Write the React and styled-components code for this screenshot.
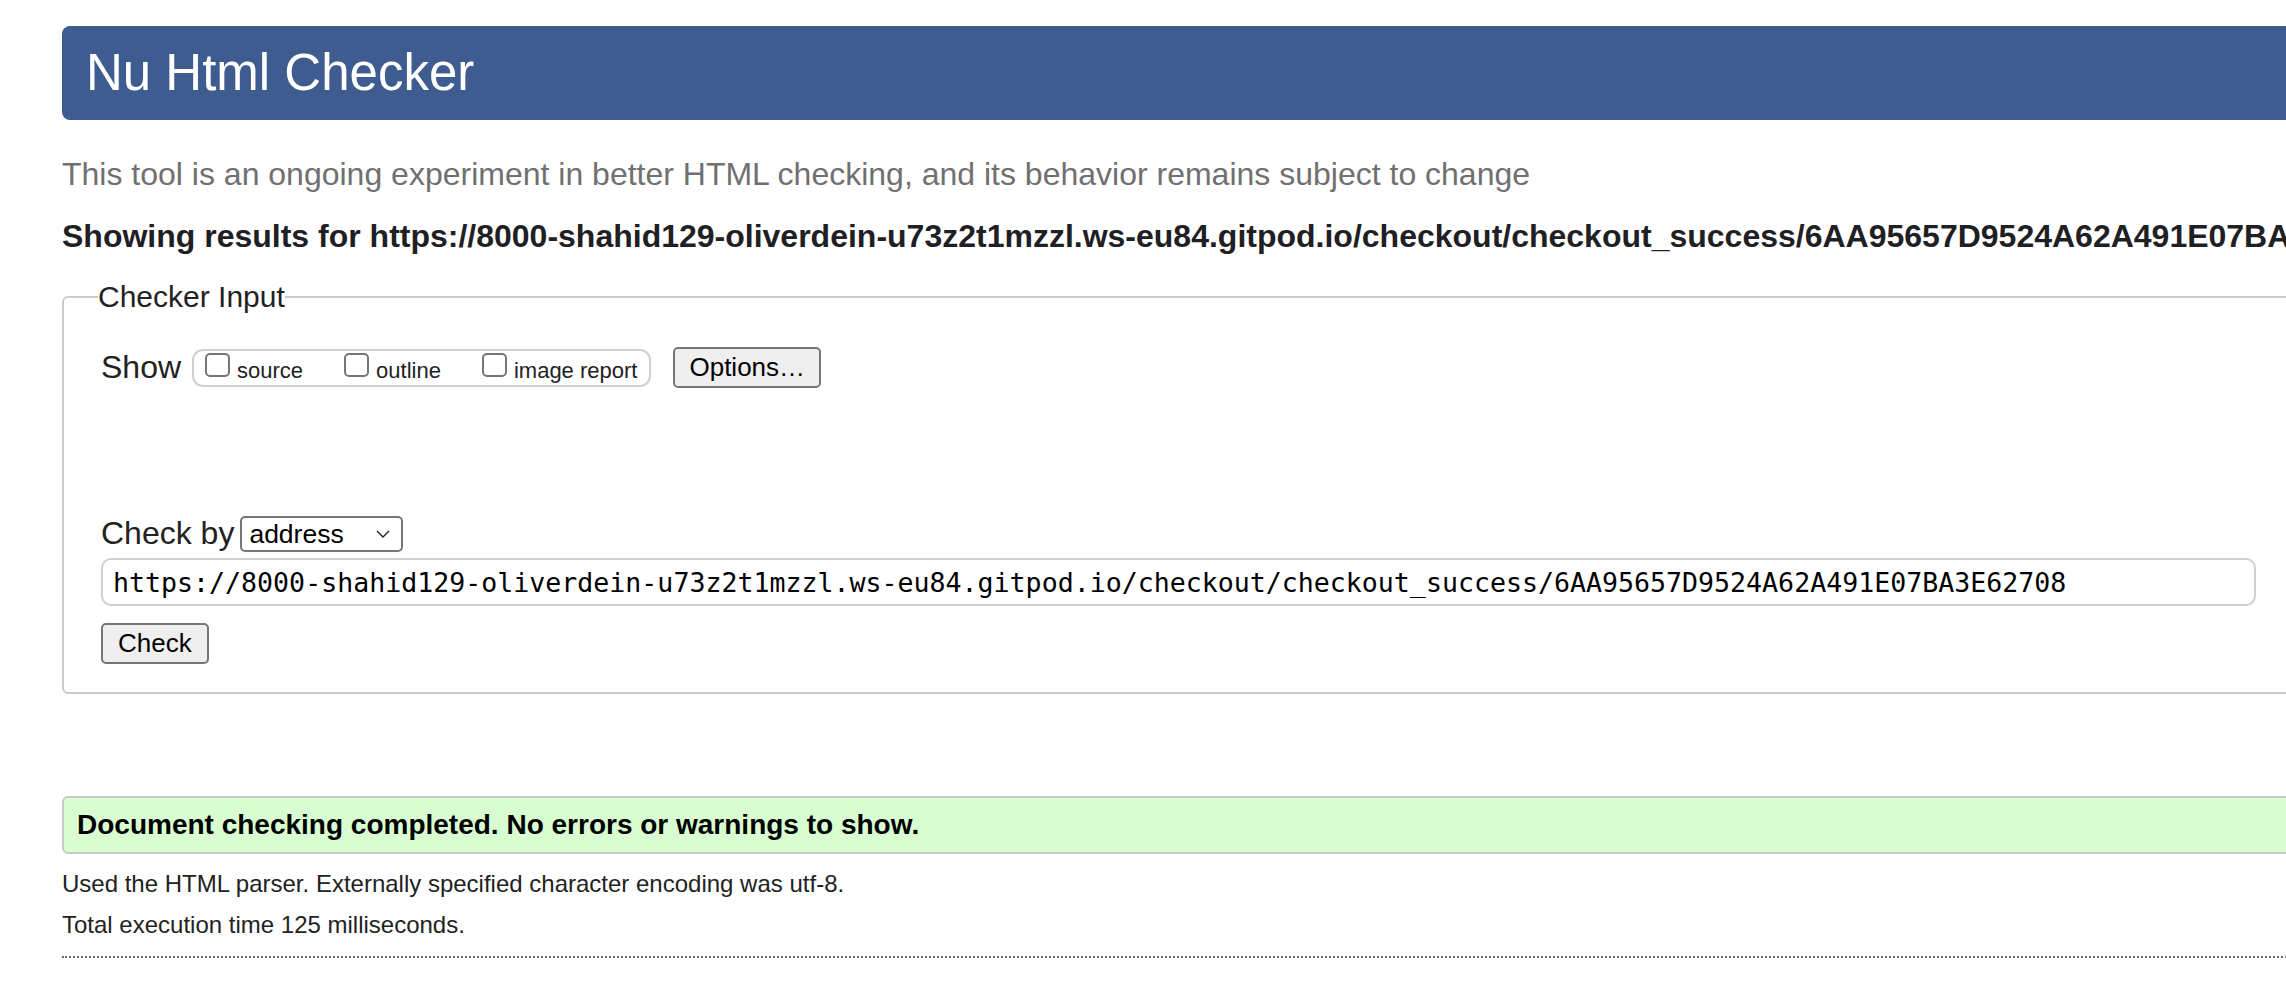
import React from "react";
import styled, { createGlobalStyle } from "styled-components";

const GlobalStyle = createGlobalStyle`
  html, body {
    margin: 0;
    padding: 0;
    background: #fff;
    overflow: hidden;
  }
  body {
    font-family: "Liberation Sans", Arial, Helvetica, sans-serif;
    color: #222;
  }
`;

const Page = styled.div`
  width: 2600px;
  padding: 26px 0 0 62px;
`;

const Header = styled.header`
  height: 94px;
  display: flex;
  align-items: center;
  padding-left: 24px;
  background: #3e5c8f;
  border-radius: 8px;

  h1 {
    margin: 0;
    font-size: 51px;
    font-weight: 400;
    color: #fff;
    line-height: 1.2;
  }
`;

const Intro = styled.p`
  margin: 36px 0 0;
  font-size: 32px;
  line-height: 37px;
  color: #707070;
`;

const ResultsFor = styled.h2`
  margin: 25px 0 0;
  font-size: 32px;
  line-height: 37px;
  font-weight: 700;
  color: #1f2024;
  white-space: nowrap;
`;

const Fieldset = styled.fieldset`
  margin: 25px 0 0;
  padding: 33px 37px 28px;
  border: 2px solid #cbcbcb;
  border-radius: 6px;
  min-width: 0;

  legend {
    margin-left: -3px;
    padding: 0;
    font-size: 30px;
    line-height: 34px;
    color: #222;
  }
`;

const Row = styled.div`
  display: flex;
  align-items: center;
  margin-top: ${(p) => p.$gap || 0}px;
`;

const Label = styled.span`
  font-size: 32px;
  line-height: 37px;
  color: #222;
  margin-right: ${(p) => p.$space || 0}px;
`;

const Pill = styled.div`
  box-sizing: border-box;
  height: 38px;
  display: flex;
  align-items: center;
  gap: 41px;
  padding: 0 12px 0 11px;
  border: 2px solid #d0d0d0;
  border-radius: 11px;
  margin-right: 22px;
`;

const Choice = styled.label`
  display: flex;
  align-items: flex-end;
  gap: 7px;
  font-size: 22px;
  line-height: 25px;
  color: #222;
`;

const Box = styled.input`
  appearance: none;
  box-sizing: border-box;
  width: 25px;
  height: 24px;
  margin: 0 0 6px;
  border: 2px solid #767676;
  border-radius: 5px;
  background: #fff;
`;

const Button = styled.button`
  box-sizing: border-box;
  height: 41px;
  padding: 0 ${(p) => p.$pad || 14}px;
  font-family: "Liberation Sans", Arial, Helvetica, sans-serif;
  font-size: 26px;
  color: #000;
  background: #efefef;
  border: 2px solid #767676;
  border-radius: 5px;
`;

const SelectWrap = styled.div`
  position: relative;
  display: inline-flex;
`;

const Select = styled.select`
  appearance: none;
  box-sizing: border-box;
  width: 163px;
  height: 36px;
  padding: 0 0 0 7px;
  font-family: "Liberation Sans", Arial, Helvetica, sans-serif;
  font-size: 26.5px;
  color: #000;
  background: #fff;
  border: 2px solid #767676;
  border-radius: 5px;
`;

const Chevron = styled.svg`
  position: absolute;
  right: 13px;
  top: 14px;
  pointer-events: none;
`;

const UrlInput = styled.input`
  display: block;
  box-sizing: border-box;
  width: 2155px;
  height: 48px;
  margin-top: 6px;
  padding: 0 10px;
  font-family: "DejaVu Sans Mono", "Liberation Mono", monospace;
  font-size: 26.6px;
  color: #000;
  background: #fff;
  border: 2px solid #cfcfcf;
  border-radius: 10px;
`;

const Success = styled.div`
  box-sizing: border-box;
  height: 58px;
  margin-top: 102px;
  display: flex;
  align-items: center;
  padding-left: 13px;
  background: #d7fdd1;
  border: 2px solid #c9c9c9;
  border-radius: 6px;
  font-size: 28px;
  font-weight: 700;
  color: #000;
`;

const Note = styled.p`
  margin: ${(p) => p.$top}px 0 0;
  font-size: 24px;
  line-height: 28px;
  color: #222;
`;

const Dotted = styled.hr`
  margin: 17px 0 0;
  border: 0;
  border-top: 2px dotted #6a6a6a;
  height: 0;
`;

const url =
  "https://8000-shahid129-oliverdein-u73z2t1mzzl.ws-eu84.gitpod.io/checkout/checkout_success/6AA95657D9524A62A491E07BA3E62708";

export default function App() {
  return (
    <>
      <GlobalStyle />
      <Page>
        <Header>
          <h1>Nu Html Checker</h1>
        </Header>
        <Intro>
          This tool is an ongoing experiment in better HTML checking, and its
          behavior remains subject to change
        </Intro>
        <ResultsFor>Showing results for {url}</ResultsFor>

        <Fieldset>
          <legend>Checker Input</legend>
          <Row>
            <Label $space={11}>Show</Label>
            <Pill>
              <Choice>
                <Box type="checkbox" />
                source
              </Choice>
              <Choice>
                <Box type="checkbox" />
                outline
              </Choice>
              <Choice>
                <Box type="checkbox" />
                image report
              </Choice>
            </Pill>
            <Button type="button">Options…</Button>
          </Row>

          <Row $gap={127}>
            <Label $space={6}>Check by</Label>
            <SelectWrap>
              <Select defaultValue="address">
                <option value="address">address</option>
                <option value="file">file upload</option>
                <option value="text">text input</option>
              </Select>
              <Chevron width="14" height="8" viewBox="0 0 14 8">
                <path d="M1 1l6 6 6-6" fill="none" stroke="#222" strokeWidth="1.4" />
              </Chevron>
            </SelectWrap>
          </Row>

          <UrlInput type="url" defaultValue={url} />

          <Row $gap={17}>
            <Button type="submit" $pad={15}>Check</Button>
          </Row>
        </Fieldset>

        <Success>Document checking completed. No errors or warnings to show.</Success>
        <Note $top={16}>
          Used the HTML parser. Externally specified character encoding was utf-8.
        </Note>
        <Note $top={13}>Total execution time 125 milliseconds.</Note>
        <Dotted />
      </Page>
    </>
  );
}
